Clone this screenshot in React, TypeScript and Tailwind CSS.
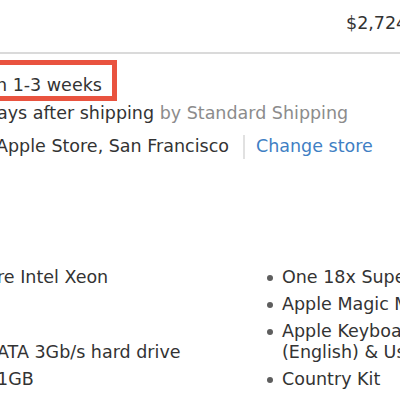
const leftItems = ["re Intel Xeon\n\u00a0", "\u00a0", "ATA 3Gb/s hard drive", "1GB"];
const rightItems = ["One 18x SuperDrive", "Apple Magic Mouse", "Apple Keyboard with Numeric Keypad\n(English) & User's Guide", "Country Kit"];

export default function App() {
    return (
        <div className="w-[400px] h-[400px] overflow-hidden bg-white text-[17.5px] text-[#333] font-['DejaVu_Sans',sans-serif]">
            {/* Price */}
            <div className="h-[52px] pt-[13px] pl-[346px] whitespace-nowrap leading-[20px]">$2,724.00</div>
            <div className="h-[2px] bg-[#dadada]" />

            {/* Delivery */}
            <div className="mt-[6px] w-[117px] h-[41px] border-[5px] border-l-0 border-[#e9533f] flex items-end">
                <span className="ml-[-4px] whitespace-nowrap leading-[22px]">n 1-3 weeks</span>
            </div>
            <div className="mt-[2px] h-[20px] leading-[20px] whitespace-nowrap ml-[-3px]">
                ays after shipping <span className="text-[#8c8c8c]">by Standard Shipping</span>
            </div>
            <div className="mt-[11px] flex items-center h-[25px] whitespace-nowrap">
                <span className="ml-[-4px]">Apple Store, San Francisco</span>
                <span className="ml-[14px] mr-[11px] w-[2px] h-[24px] bg-[#e1e1e1]" />
                <span className="text-[#3f7fc4]">Change store</span>
            </div>

            {/* Specs */}
            <div className="mt-[108px] flex leading-[21px] whitespace-nowrap">
                <ul className="w-[258px] shrink-0 flex flex-col gap-[6px]">
                    {leftItems.map((t, i) => (
                        <li key={i} className="whitespace-pre ml-[-3px]">{t}</li>
                    ))}
                </ul>
                <ul className="flex-1 flex flex-col gap-[6px]">
                    {rightItems.map((t, i) => (
                        <li key={i} className="flex">
                            <span className="w-[24px] shrink-0 flex justify-center pt-[8px]">
                                <span className="w-[6px] h-[6px] rounded-full bg-[#5e5e5e]" />
                            </span>
                            <span className="whitespace-pre">{t}</span>
                        </li>
                    ))}
                </ul>
            </div>
        </div>
    );
}
